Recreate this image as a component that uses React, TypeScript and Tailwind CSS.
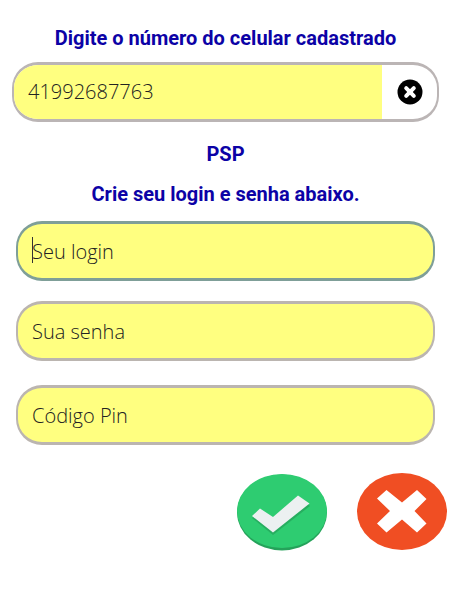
import { useState } from "react";

function ClearIcon() {
  return (
    <svg viewBox="0 0 26 26" className="h-[26px] w-[26px]" aria-hidden="true">
      <circle cx="13" cy="13" r="12.5" fill="#000" />
      <path
        d="M9.2 9.2 16.8 16.8M16.8 9.2 9.2 16.8"
        stroke="#fff"
        strokeWidth="4"
        strokeLinecap="round"
      />
    </svg>
  );
}

function ConfirmIcon() {
  return (
    <svg viewBox="0 0 90 78" className="h-[78px] w-[90px]" aria-hidden="true">
      <ellipse cx="45" cy="39.500" rx="45" ry="38" fill="#25a25a" />
      <ellipse cx="45" cy="38" rx="45" ry="37" fill="#2ecc71" />
      <path d="M15 45 23 38 36 46 61 25 73 33 36 62Z" fill="#27ae60" />
      <path d="M15 43 23 35.500 36 44 61 22.500 72.500 30.500 36 59.500Z" fill="#ecf0f1" />
    </svg>
  );
}

function CancelIcon() {
  return (
    <svg viewBox="0 0 90 78" className="h-[78px] w-[90px]" aria-hidden="true">
      <ellipse cx="45" cy="38.500" rx="45" ry="38.500" fill="#f04e23" />
      <path
        d="M20 25.500 29.500 17 45 29.500 60 17 69.500 26 57.500 38 69.500 50.500 60 59.500 45 46.500 29.500 59.500 20 50.500 33 38Z"
        fill="#fff"
      />
    </svg>
  );
}

const fieldClass =
  "h-[60px] w-full rounded-[26px] border-x-2 border-y-[3px] border-[#bbb5b0] bg-[#ffff80] px-[14px] text-xl font-light text-[#222] placeholder:text-[#222] outline-none";

export default function App() {
  const [phone, setPhone] = useState("41992687763");
  const [login, setLogin] = useState("");

  return (
    <main className="min-h-screen bg-white pt-6 pr-5 pl-3 font-['Open_Sans',sans-serif]">
      <form onSubmit={(e) => e.preventDefault()}>
        <label
          htmlFor="phone"
          className="block text-center font-['Roboto',sans-serif] text-xl leading-7 font-bold text-[#0c02a6]"
        >
          Digite o número do celular cadastrado
        </label>

        <div className="mt-[10px] flex h-[60px] overflow-hidden rounded-[26px] border-x-2 border-y-[3px] border-[#bbb5b5] bg-white">
          <input
            id="phone"
            type="tel"
            value={phone}
            onChange={(e) => setPhone(e.target.value)}
            className="min-w-0 flex-1 bg-[#ffff80] px-[14px] text-xl font-light text-[#222] outline-none"
          />
          <button
            type="button"
            aria-label="Limpar"
            onClick={() => setPhone("")}
            className="flex w-[55px] items-center justify-center"
          >
            <ClearIcon />
          </button>
        </div>

        <div className="mt-[18px] text-center font-['Roboto',sans-serif] text-xl leading-7 font-bold text-[#0c02a6]">
          <h1>PSP</h1>
          <p className="mt-3">Crie seu login e senha abaixo.</p>
        </div>

        <div className="mt-[13px] px-1">
          <div className="relative">
            <input
              type="text"
              aria-label="Seu login"
              placeholder="Seu login"
              value={login}
              onChange={(e) => setLogin(e.target.value)}
              className="h-[60px] w-full rounded-[26px] border-x-2 border-y-[3px] border-[#7f9f98] bg-[#ffff80] px-[14px] text-xl font-light text-[#222] outline-none placeholder:text-[#222]"
            />
            {login === "" && (
              <span className="absolute top-4 left-4 h-[26px] w-px bg-[#333]" />
            )}
          </div>
          <input
            type="password"
            aria-label="Sua senha"
            placeholder="Sua senha"
            className={`mt-5 ${fieldClass}`}
          />
          <input
            type="password"
            aria-label="Código Pin"
            placeholder="Código Pin"
            className={`mt-6 ${fieldClass}`}
          />
        </div>

        <div className="-mr-2 mt-7 flex justify-end gap-[30px]">
          <button type="submit" aria-label="Confirmar">
            <ConfirmIcon />
          </button>
          <button type="button" aria-label="Cancelar">
            <CancelIcon />
          </button>
        </div>
      </form>
    </main>
  );
}
